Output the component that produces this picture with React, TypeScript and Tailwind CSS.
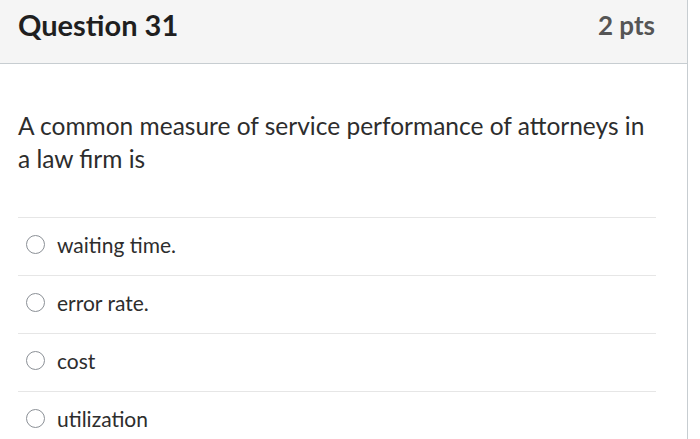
export default function App() {
  const answers = ["waiting time.", "error rate.", "cost", "utilization"];
  return (
    <div className="h-[439px] w-[700px] overflow-hidden bg-white" style={{ fontFamily: "Lato, 'Open Sans', sans-serif" }}>
      <div className="w-[688px] border-r border-[#c7cdd1] h-full">
        <div className="flex h-[64px] items-center justify-between border-b border-[#c7cdd1] bg-[#f5f5f5] pb-[14px] pl-[18px] pr-[32px]">
          <span className="text-[29px] font-bold text-[#1f1f1f] leading-none">Question 31</span>
          <span className="text-[26px] font-bold text-[#555] leading-none">2 pts</span>
        </div>
        <div className="pl-[18px] pr-[31px] pt-[45px]">
          <p className="text-[24.5px] leading-[33px] text-[#2d2d2d]">
            A common measure of service performance of attorneys in a law firm is
          </p>
          <div className="mt-[42px]">
            {answers.map((a) => (
              <div key={a} className="flex h-[58px] items-center border-t border-[#e6e6e6] pb-[4px] pl-[8px]">
                <span className="mr-[12px] h-[19px] w-[19px] rounded-full border border-[#8b9096] bg-white" />
                <span className="text-[21px] text-[#2d2d2d]">{a}</span>
              </div>
            ))}
          </div>
        </div>
      </div>
    </div>
  );
}
